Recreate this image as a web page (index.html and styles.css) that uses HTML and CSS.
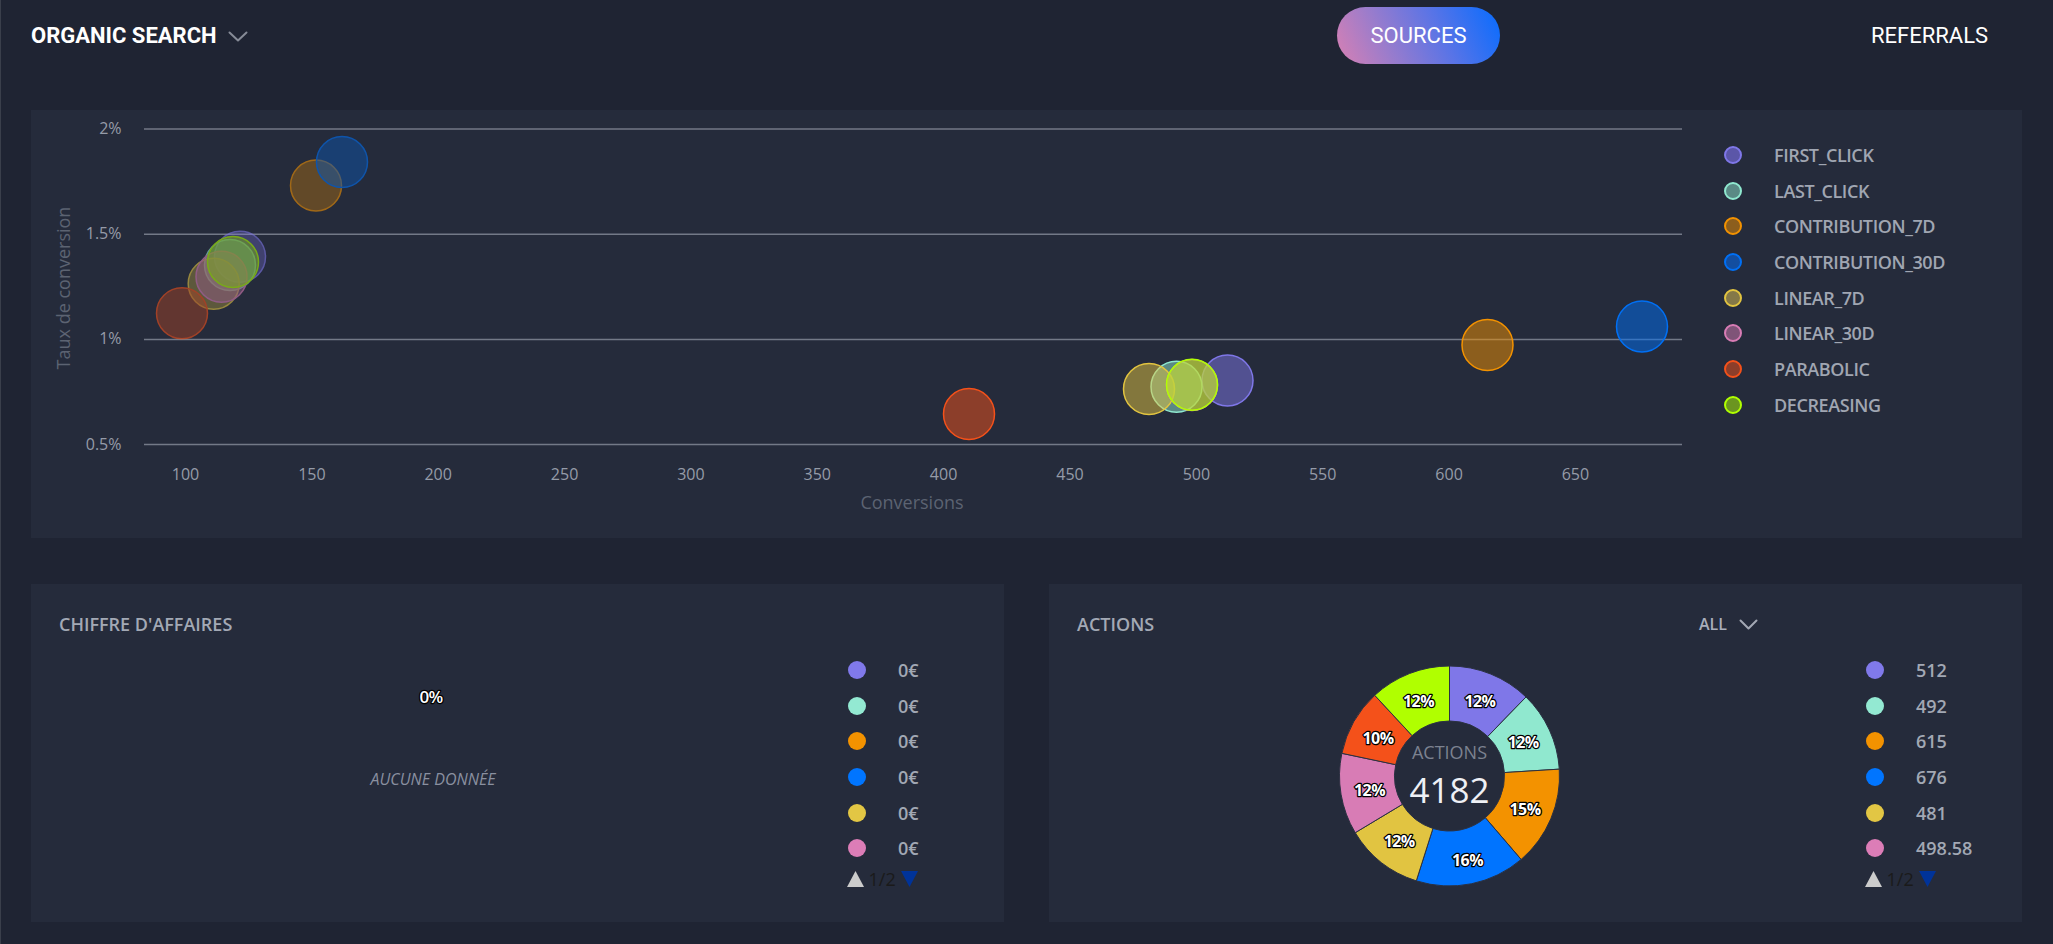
FILE: index.html
```html
<!DOCTYPE html>
<html lang="fr">
<head>
<meta charset="utf-8">
<title>Organic search</title>
<link rel="stylesheet" href="styles.css">
</head>
<body>
<div class="page">
  <header class="topbar">
    <div class="channel">
      <span>ORGANIC SEARCH</span>
      <svg class="chev chev-head" viewBox="0 0 20 11" width="20" height="11"><polyline points="1.5,1.5 10,9.5 18.5,1.5"/></svg>
    </div>
    <nav class="tabs">
      <span class="tab tab-active">SOURCES</span>
      <span class="tab">REFERRALS</span>
    </nav>
  </header>

  <section class="panel scatter-panel">
    <svg class="scatter" viewBox="0 0 1693 428" width="1693" height="428">
      <g class="grid">
        <line x1="113" y1="19" x2="1651" y2="19"/>
        <line x1="113" y1="124.2" x2="1651" y2="124.2"/>
        <line x1="113" y1="229.4" x2="1651" y2="229.4"/>
        <line x1="113" y1="334.6" x2="1651" y2="334.6"/>
      </g>
      <g class="tick tick-y">
        <text x="90.5" y="24">2%</text>
        <text x="90.5" y="129.2">1.5%</text>
        <text x="90.5" y="234.4">1%</text>
        <text x="90.5" y="339.6">0.5%</text>
      </g>
      <g class="tick tick-x">
        <text x="154.5" y="370">100</text>
        <text x="280.9" y="370">150</text>
        <text x="407.2" y="370">200</text>
        <text x="533.6" y="370">250</text>
        <text x="659.9" y="370">300</text>
        <text x="786.3" y="370">350</text>
        <text x="912.6" y="370">400</text>
        <text x="1039" y="370">450</text>
        <text x="1165.4" y="370">500</text>
        <text x="1291.7" y="370">550</text>
        <text x="1418.1" y="370">600</text>
        <text x="1544.4" y="370">650</text>
      </g>
      <text class="axis-title" x="881" y="399">Conversions</text>
      <text class="axis-title" transform="translate(39 178) rotate(-90)">Taux de conversion</text>

      <g class="bubbles bubbles-faded">
        <circle class="b-purple" cx="209" cy="146.7" r="25.5"/>
        <circle class="b-teal" cx="199" cy="155" r="25.5"/>
        <circle class="b-orange" cx="285" cy="75.5" r="25.5"/>
        <circle class="b-blue" cx="311" cy="52" r="25.5"/>
        <circle class="b-yellow" cx="182.7" cy="173.7" r="25.5"/>
        <circle class="b-pink" cx="190.5" cy="166.7" r="25.5"/>
        <circle class="b-red" cx="151" cy="203.3" r="25.5"/>
        <circle class="b-lime" cx="202" cy="152" r="25.5"/>
      </g>
      <g class="bubbles">
        <circle class="b-purple" cx="1196.5" cy="270.5" r="25.5"/>
        <circle class="b-teal" cx="1145.5" cy="276.7" r="25.5"/>
        <circle class="b-orange" cx="1456.5" cy="235" r="25.5"/>
        <circle class="b-blue" cx="1611" cy="216.5" r="25.5"/>
        <circle class="b-yellow" cx="1118" cy="279" r="25.5"/>
        <circle class="b-pink" cx="1161" cy="275" r="25.5"/>
        <circle class="b-red" cx="938" cy="304" r="25.5"/>
        <circle class="b-lime" cx="1161" cy="274.8" r="25.5"/>
      </g>
    </svg>
    <ul class="series-legend">
      <li><span class="dot ring-purple"></span>FIRST_CLICK</li>
      <li><span class="dot ring-teal"></span>LAST_CLICK</li>
      <li><span class="dot ring-orange"></span>CONTRIBUTION_7D</li>
      <li><span class="dot ring-blue"></span>CONTRIBUTION_30D</li>
      <li><span class="dot ring-yellow"></span>LINEAR_7D</li>
      <li><span class="dot ring-pink"></span>LINEAR_30D</li>
      <li><span class="dot ring-red"></span>PARABOLIC</li>
      <li><span class="dot ring-lime"></span>DECREASING</li>
    </ul>
  </section>

  <div class="row">
    <section class="panel card">
      <div class="card-head">
        <h2 class="card-title">CHIFFRE D'AFFAIRES</h2>
      </div>
      <div class="card-body">
        <svg class="pie" viewBox="0 0 817 286" width="817" height="286">
          <text class="slice-label empty-label" x="400" y="67">0%</text>
          <text class="no-data" x="402" y="149">AUCUNE DONNÉE</text>
        </svg>
        <div class="legend-col">
          <ul class="value-legend">
            <li><span class="dot fill-purple"></span>0€</li>
            <li><span class="dot fill-teal"></span>0€</li>
            <li><span class="dot fill-orange"></span>0€</li>
            <li><span class="dot fill-blue"></span>0€</li>
            <li><span class="dot fill-yellow"></span>0€</li>
            <li><span class="dot fill-pink"></span>0€</li>
          </ul>
          <div class="pager">
            <svg class="arrow" viewBox="0 0 17 16" width="17" height="16"><polygon class="arrow-up" points="8.5,0 17,16 0,16"/></svg>
            <span class="pager-text">1/2</span>
            <svg class="arrow" viewBox="0 0 17 16" width="17" height="16"><polygon class="arrow-down" points="0,0 17,0 8.5,16"/></svg>
          </div>
        </div>
      </div>
    </section>

    <section class="panel card">
      <div class="card-head card-head-select">
        <h2 class="card-title">ACTIONS</h2>
        <div class="selector">
          <span>ALL</span>
          <svg class="chev chev-sel" viewBox="0 0 19 11" width="19" height="11"><polyline points="1.5,1.5 9.5,9.5 17.5,1.5"/></svg>
        </div>
      </div>
      <div class="card-body">
        <svg class="pie" viewBox="0 0 817 286" width="817" height="286">
          <g transform="translate(400.5 140)">
            <path class="s-purple" d="M0,-110 A110,110 0 0 1 76.52,-79.02 L38.26,-39.51 A55,55 0 0 0 0,-55 Z"/>
            <path class="s-teal" d="M76.52,-79.02 A110,110 0 0 1 109.79,-6.85 L54.89,-3.42 A55,55 0 0 0 38.26,-39.51 Z"/>
            <path class="s-orange" d="M109.79,-6.85 A110,110 0 0 1 71.63,83.48 L35.82,41.74 A55,55 0 0 0 54.89,-3.42 Z"/>
            <path class="s-blue" d="M71.63,83.48 A110,110 0 0 1 -33.19,104.87 L-16.59,52.44 A55,55 0 0 0 35.82,41.74 Z"/>
            <path class="s-yellow" d="M-33.19,104.87 A110,110 0 0 1 -94.26,56.70 L-47.13,28.35 A55,55 0 0 0 -16.59,52.44 Z"/>
            <path class="s-pink" d="M-94.26,56.70 A110,110 0 0 1 -107.64,-22.66 L-53.82,-11.33 A55,55 0 0 0 -47.13,28.35 Z"/>
            <path class="s-red" d="M-107.64,-22.66 A110,110 0 0 1 -74.77,-80.68 L-37.38,-40.34 A55,55 0 0 0 -53.82,-11.33 Z"/>
            <path class="s-lime" d="M-74.77,-80.68 A110,110 0 0 1 0,-110 L0,-55 A55,55 0 0 0 -37.38,-40.34 Z"/>
            <text class="slice-label" x="30.4" y="-69">12%</text>
            <text class="slice-label" x="73.6" y="-28">12%</text>
            <text class="slice-label" x="75.5" y="38.5">15%</text>
            <text class="slice-label" x="18" y="89.5">16%</text>
            <text class="slice-label" x="-50.4" y="71">12%</text>
            <text class="slice-label" x="-80" y="19.5">12%</text>
            <text class="slice-label" x="-71.5" y="-32">10%</text>
            <text class="slice-label" x="-31" y="-69.4">12%</text>
            <text class="center-title" x="0" y="-17">ACTIONS</text>
            <text class="center-value" x="0" y="27">4182</text>
          </g>
        </svg>
        <div class="legend-col">
          <ul class="value-legend">
            <li><span class="dot fill-purple"></span>512</li>
            <li><span class="dot fill-teal"></span>492</li>
            <li><span class="dot fill-orange"></span>615</li>
            <li><span class="dot fill-blue"></span>676</li>
            <li><span class="dot fill-yellow"></span>481</li>
            <li><span class="dot fill-pink"></span>498.58</li>
          </ul>
          <div class="pager">
            <svg class="arrow" viewBox="0 0 17 16" width="17" height="16"><polygon class="arrow-up" points="8.5,0 17,16 0,16"/></svg>
            <span class="pager-text">1/2</span>
            <svg class="arrow" viewBox="0 0 17 16" width="17" height="16"><polygon class="arrow-down" points="0,0 17,0 8.5,16"/></svg>
          </div>
        </div>
      </div>
    </section>
  </div>
</div>
</body>
</html>
```

FILE: styles.css
```css
* { box-sizing: border-box; }

body {
  margin: 0;
  background: #1f2433;
  font-family: "Open Sans", "Liberation Sans", sans-serif;
}

.page {
  width: 2053px;
  height: 944px;
  padding: 7px 31px 22px 31px;
  box-shadow: inset 1px 0 0 #3a3f4b;
  display: flex;
  flex-direction: column;
}

/* ---------- top bar ---------- */
.topbar {
  height: 57px;
  flex: none;
  display: flex;
  align-items: center;
  justify-content: space-between;
  padding-right: 11px;
  margin-bottom: 46px;
  font-family: Roboto, "Liberation Sans", sans-serif;
}

.channel {
  display: flex;
  align-items: center;
  gap: 11px;
  color: #ffffff;
  font-size: 22px;
  font-weight: 700;
}

.chev { display: block; fill: none; stroke-width: 2; stroke-linecap: round; stroke-linejoin: round; }
.chev-head { stroke: #868b97; margin-top: 2px; }
.chev-sel { stroke: #a3a8b4; }

.tabs { display: flex; gap: 348px; }

.tab {
  width: 163px;
  height: 57px;
  display: flex;
  align-items: center;
  justify-content: center;
  border-radius: 29px;
  color: #ffffff;
  font-size: 22px;
  font-weight: 400;
}

.tab-active {
  background: linear-gradient(65deg, #d880b3 0%, #9a7ccc 30%, #5a74e6 62%, #066cff 100%);
}

/* ---------- panels ---------- */
.panel { background: #252b3b; }

.scatter-panel {
  height: 428px;
  flex: none;
  display: flex;
  margin-bottom: 46px;
}

.scatter { display: block; flex: none; }

.grid line { stroke: #737987; stroke-width: 1.5; }

.tick text { fill: #959ba8; font-size: 16px; }
.tick-y text { text-anchor: end; }
.tick-x text { text-anchor: middle; }

.axis-title { fill: #5c6372; font-size: 18px; text-anchor: middle; }

.bubbles circle { stroke-width: 1.5; }
.bubbles-faded { opacity: 0.6; }

.b-purple { fill: rgba(127, 119, 232, 0.5); stroke: #7f77e8; }
.b-teal   { fill: rgba(143, 232, 207, 0.5); stroke: #8fe8cf; }
.b-orange { fill: rgba(243, 146, 0, 0.5);   stroke: #f39200; }
.b-blue   { fill: rgba(0, 112, 245, 0.5);   stroke: #0070f5; }
.b-yellow { fill: rgba(226, 196, 64, 0.5);  stroke: #e2c440; }
.b-pink   { fill: rgba(216, 124, 181, 0.5); stroke: #d87cb5; }
.b-red    { fill: rgba(244, 81, 26, 0.5);   stroke: #f4511a; }
.b-lime   { fill: rgba(176, 255, 0, 0.5);   stroke: #b0ff00; }

.series-legend {
  list-style: none;
  margin: 27px 0 0;
  padding: 0;
}

.series-legend li {
  height: 35.7px;
  display: flex;
  align-items: center;
  gap: 32px;
  color: #a0a6b2;
  font-size: 18px;
  font-weight: 600;
  letter-spacing: -0.4px;
}

.dot {
  width: 18px;
  height: 18px;
  border-radius: 50%;
  flex: none;
}

.ring-purple { background: #5b56a8; border: 2px solid #7f77e8; }
.ring-teal   { background: #5a8a85; border: 2px solid #8fe8cf; }
.ring-orange { background: #8c5e1d; border: 2px solid #f39200; }
.ring-blue   { background: #134ea0; border: 2px solid #0070f5; }
.ring-yellow { background: #847848; border: 2px solid #e2c440; }
.ring-pink   { background: #7f5478; border: 2px solid #d87cb5; }
.ring-red    { background: #8c3e2a; border: 2px solid #f4511a; }
.ring-lime   { background: #6b9520; border: 2px solid #b0ff00; }

/* ---------- bottom cards ---------- */
.row {
  height: 338px;
  flex: none;
  display: flex;
  gap: 45px;
}

.card {
  flex: 1;
  display: flex;
  flex-direction: column;
}

.card-head {
  height: 52px;
  flex: none;
  display: flex;
  align-items: center;
  justify-content: space-between;
  padding: 28px 28px 0 28px;
}

.card-head-select { padding-right: 264px; }

.card-title {
  margin: 0;
  color: #a3a9b5;
  font-size: 18px;
  line-height: 24px;
  font-weight: 600;
}

.selector {
  display: flex;
  align-items: center;
  gap: 12px;
  color: #a9aebb;
  font-size: 16px;
  font-weight: 600;
}

.card-body {
  flex: 1;
  display: flex;
}

.pie { display: block; flex: none; }

.pie path { stroke: #2b3142; stroke-width: 1; }

.s-purple { fill: #7f77e8; }
.s-teal   { fill: #90e8cf; }
.s-orange { fill: #f39200; }
.s-blue   { fill: #0074ff; }
.s-yellow { fill: #e1c441; }
.s-pink   { fill: #d87cb5; }
.s-red    { fill: #f4511a; }
.s-lime   { fill: #b0ff00; }

.slice-label {
  fill: #ffffff;
  stroke: #000000;
  stroke-width: 2.5px;
  stroke-linejoin: round;
  paint-order: stroke;
  font-size: 16px;
  font-weight: 700;
  letter-spacing: -0.6px;
  text-anchor: middle;
}

.empty-label { font-size: 17px; font-weight: 600; }

.no-data {
  fill: #8a90a0;
  font-size: 16px;
  font-style: italic;
  text-anchor: middle;
}

.center-title { fill: #7c8290; font-size: 18px; text-anchor: middle; }
.center-value { fill: #eef0f5; font-size: 35px; text-anchor: middle; }

.legend-col { display: flex; flex-direction: column; }

.value-legend {
  list-style: none;
  margin: 16px 0 0;
  padding: 0;
}

.value-legend li {
  height: 35.7px;
  display: flex;
  align-items: center;
  gap: 32px;
  color: #a2a8b4;
  font-size: 18px;
  font-weight: 600;
}

.fill-purple { background: #8079ea; }
.fill-teal   { background: #93e9d2; }
.fill-orange { background: #f39200; }
.fill-blue   { background: #0075ff; }
.fill-yellow { background: #e2c644; }
.fill-pink   { background: #dc7db7; }

.pager {
  height: 26px;
  display: flex;
  align-items: center;
  margin-left: -1.5px;
}

.arrow { display: block; }
.arrow-up { fill: #cccccc; }
.arrow-down { fill: #003399; }

.pager-text {
  margin: 0 5px;
  color: #1a1a1a;
  font-size: 18px;
}
```
